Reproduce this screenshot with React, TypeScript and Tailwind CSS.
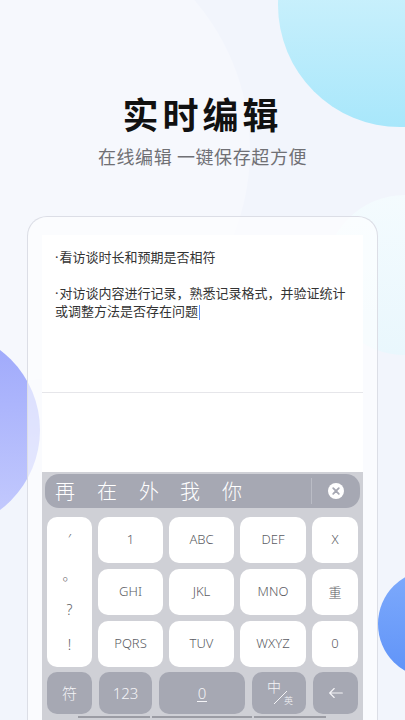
import React from 'react';

const cjk = { fontFamily: '"Noto Sans CJK SC", "Noto Sans", sans-serif' };
const latin = { fontFamily: '"Noto Sans", "Noto Sans CJK SC", sans-serif' };

const Key: React.FC<{ children: React.ReactNode; className?: string }> = ({ children, className = '' }) => (
  <div
    className={`flex items-center justify-center rounded-[10px] bg-white text-[13px] font-light text-[#5b5c63] ${className}`}
    style={latin}
  >
    {children}
  </div>
);

const FnKey: React.FC<{ children: React.ReactNode; className?: string }> = ({ children, className = '' }) => (
  <div
    className={`flex h-[42px] items-center justify-center rounded-[10px] bg-[#a6a8b3] text-[15px] font-light text-[#f4f4f7] ${className}`}
    style={latin}
  >
    {children}
  </div>
);

const Dot = () => (
  <span className="mr-[1px]" style={latin}>
    ·
  </span>
);

export default function App() {
  return (
    <div className="relative h-[720px] w-[405px] overflow-hidden bg-[#f2f5fc]" style={cjk}>
      {/* background blobs */}
      <div className="absolute left-[-210px] top-[-80px] h-[460px] w-[460px] rounded-full bg-[#f6f8fd]" />
      <div className="absolute left-[278px] top-[-117px] h-[244px] w-[244px] rounded-full bg-gradient-to-b from-[#e2f7fd] to-[#a8e7fb]" />
      <div className="absolute left-[325px] top-[195px] h-[160px] w-[160px] rounded-full bg-gradient-to-b from-[#f4fbfe] to-[#e9f7fd]" />
      <div className="absolute left-[-160px] top-[330px] h-[200px] w-[200px] rounded-full bg-gradient-to-b from-[#9da7fb] to-[#c6ccfd]" />
      <div className="absolute left-[378px] top-[570px] h-[108px] w-[108px] rounded-full bg-gradient-to-b from-[#7eaafc] to-[#5f93f8]" />

      <div className="relative flex h-full flex-col items-center">
        <h1 className="pt-[93px] text-[36px] font-bold leading-[40px] tracking-[4px] text-[#111]">实时编辑</h1>
        <p className="mt-[11px] text-[18px] leading-[25px] tracking-[0.6px] text-[#707075]">在线编辑 一键保存超方便</p>

        <div className="mt-[47px] flex w-[351px] flex-1 flex-col rounded-t-[20px] border border-b-0 border-[#dcdee6] bg-white/60 px-[14px] pt-[18px]">
          <div className="flex flex-1 flex-col bg-white">
            <div className="h-[158px] border-b-[1.5px] border-[#e6e6ea] pl-[13px] pt-[13px] text-[13px] leading-[18px] text-[#333]">
              <div>
                <Dot />
                看访谈时长和预期是否相符
              </div>
              <div className="h-[18px]" />
              <div>
                <Dot />
                对访谈内容进行记录，熟悉记录格式，并验证统计
              </div>
              <div>
                或调整方法是否存在问题
                <span className="ml-[1px] inline-block h-[15px] w-[1px] bg-[#5b93ff] align-middle" />
              </div>
            </div>
            <div className="h-[79px]" />

            <div className="flex flex-1 flex-col bg-[#cfd0d6] px-[3px] pt-[2px]">
              <div className="flex h-[34px] items-center rounded-[14px] bg-[#a6a8b3]">
                <div className="flex flex-1 items-center pl-[10px] text-[20px] font-light text-white">
                  <span className="w-[42px]">再</span>
                  <span className="w-[42px]">在</span>
                  <span className="w-[41px]">外</span>
                  <span className="w-[42px]">我</span>
                  <span>你</span>
                </div>
                <div className="h-[26px] w-[1px] bg-[#babcc5]" />
                <div className="flex w-[48px] items-center justify-center">
                  <div className="flex h-[16px] w-[16px] items-center justify-center rounded-full bg-white">
                    <svg viewBox="0 0 16 16" className="h-[16px] w-[16px]">
                      <path d="M5.2 5.2 L10.8 10.8 M10.8 5.2 L5.2 10.8" stroke="#a6a8b3" strokeWidth="1.8" strokeLinecap="round" />
                    </svg>
                  </div>
                </div>
              </div>

              <div className="mt-[9px] grid grid-cols-[45px_65px_65px_66px_46px] grid-rows-[46px_46px_46px] gap-x-[6px] gap-y-[6px] pl-[2px]">
                <Key className="row-span-3 flex-col justify-start gap-0 pt-[5px] text-[14px]">
                  <span className="flex h-[35px] items-center">′</span>
                  <span className="flex h-[35px] items-center">。</span>
                  <span className="flex h-[35px] items-center">?</span>
                  <span className="flex h-[35px] items-center">!</span>
                </Key>
                <Key>1</Key>
                <Key>ABC</Key>
                <Key>DEF</Key>
                <Key>X</Key>
                <Key>GHI</Key>
                <Key>JKL</Key>
                <Key>MNO</Key>
                <Key className="text-[10px]">
                  <span style={cjk}>重</span>
                </Key>
                <Key>PQRS</Key>
                <Key>TUV</Key>
                <Key>WXYZ</Key>
                <Key>0</Key>
              </div>

              <div className="mt-[5px] flex gap-[7px] pl-[2px]">
                <FnKey className="w-[45px]">
                  <span style={cjk}>符</span>
                </FnKey>
                <FnKey className="w-[53px]">123</FnKey>
                <FnKey className="w-[86px]">
                  <span className="border-b border-[#f4f4f7] px-[1px] leading-[16px]">0</span>
                </FnKey>
                <FnKey className="relative w-[54px]">
                  <svg viewBox="0 0 54 42" className="absolute inset-0 h-[42px] w-[54px]">
                    <path d="M22 32 L35 19" stroke="#f4f4f7" strokeWidth="1" />
                  </svg>
                  <span className="absolute left-[15px] top-[6px] text-[14px] leading-[16px]" style={cjk}>中</span>
                  <span className="absolute left-[32px] top-[23px] text-[9px] leading-[12px]" style={cjk}>英</span>
                </FnKey>
                <FnKey className="w-[45px]">
                  <svg viewBox="0 0 20 20" className="h-[18px] w-[18px]">
                    <path d="M17 10 H3 M8 5 L3 10 L8 15" stroke="#f4f4f7" strokeWidth="1.3" fill="none" strokeLinecap="round" strokeLinejoin="round" />
                  </svg>
                </FnKey>
              </div>

              <div className="mt-[2px] flex gap-[2px] pl-[33px]">
                <div className="h-[2px] w-[72px] bg-[#9b9ca4]" />
                <div className="h-[2px] w-[100px] bg-[#9b9ca4]" />
                <div className="h-[2px] w-[72px] bg-[#9b9ca4]" />
              </div>
            </div>
          </div>
        </div>
      </div>
    </div>
  );
}
